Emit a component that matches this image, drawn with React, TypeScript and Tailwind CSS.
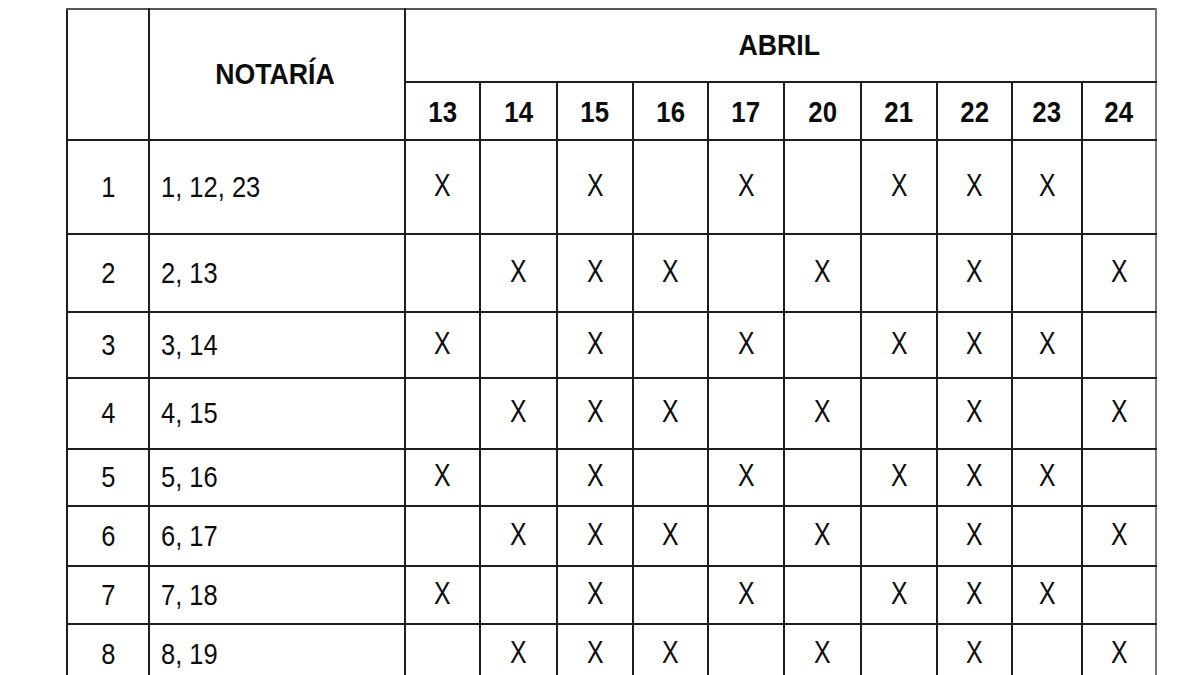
const days = [13, 14, 15, 16, 17, 20, 21, 22, 23, 24]
const dayWidths = [75, 77, 76, 75, 76, 77, 76, 75, 70, 74]

const oddPattern = [13, 15, 17, 21, 22, 23]
const evenPattern = [14, 15, 16, 20, 22, 24]

const rows = [
  { n: 1, notaria: "1, 12, 23", h: "h-[94px]" },
  { n: 2, notaria: "2, 13", h: "h-[78px]" },
  { n: 3, notaria: "3, 14", h: "h-[66px]" },
  { n: 4, notaria: "4, 15", h: "h-[71px]" },
  { n: 5, notaria: "5, 16", h: "h-[57px]" },
  { n: 6, notaria: "6, 17", h: "h-[60px]" },
  { n: 7, notaria: "7, 18", h: "h-[58px]" },
  { n: 8, notaria: "8, 19", h: "h-[60px]" },
]

function Narrow({ children, className }: { children: React.ReactNode; className: string }) {
  return <span className={`inline-block ${className}`}>{children}</span>
}

export default function App() {
  return (
    <div
      className="w-[1200px] h-[675px] overflow-hidden bg-white pl-[66px] pt-[8px] text-[#0d0d0d]"
      style={{ fontFamily: "'Liberation Sans', Arial, sans-serif" }}
    >
      <table className="table-fixed border-collapse w-[1090px]">
        <colgroup>
          <col className="w-[82px]" />
          <col className="w-[256px]" />
          {dayWidths.map((w, i) => (
            <col key={i} style={{ width: w }} />
          ))}
        </colgroup>
        <thead>
          <tr className="h-[73px]">
            <th rowSpan={2} className="border-2 border-[#1e1e1e] border-t-[#555]" />
            <th
              rowSpan={2}
              className="border-2 border-[#1e1e1e] border-t-[#555] text-[29px] font-bold text-center align-middle pr-[5px]"
            >
              <Narrow className="scale-x-[0.92] origin-center">NOTARÍA</Narrow>
            </th>
            <th
              colSpan={10}
              className="border-2 border-[#1e1e1e] border-t-[#555] border-r-[#777] text-[29px] font-bold text-center align-middle pr-[2px]"
            >
              <Narrow className="scale-x-[0.92] origin-center">ABRIL</Narrow>
            </th>
          </tr>
          <tr className="h-[58px]">
            {days.map((d, i) => (
              <th
                key={d}
                className={`border-2 border-[#1e1e1e] text-[30px] font-bold text-center align-middle ${
                  i === days.length - 1 ? "border-r-[#777]" : ""
                }`}
              >
                <Narrow className="scale-x-[0.86] origin-center">{d}</Narrow>
              </th>
            ))}
          </tr>
        </thead>
        <tbody>
          {rows.map((r) => {
            const marks = r.n % 2 === 1 ? oddPattern : evenPattern
            return (
              <tr key={r.n} className={r.h}>
                <td className="border-2 border-[#1e1e1e] text-[30px] text-center align-middle pb-[2px]">
                  <Narrow className="scale-x-[0.85] origin-center">{r.n}</Narrow>
                </td>
                <td className="border-2 border-[#1e1e1e] text-[30px] text-left align-middle pl-[11px] pb-[2px]">
                  <Narrow className="scale-x-[0.85] origin-left">{r.notaria}</Narrow>
                </td>
                {days.map((d, i) => (
                  <td
                    key={d}
                    className={`border-2 border-[#1e1e1e] text-[31px] text-center align-middle pb-[2px] ${
                      i === days.length - 1 ? "border-r-[#777]" : ""
                    }`}
                  >
                    {marks.includes(d) ? <Narrow className="scale-x-[0.8] origin-center">X</Narrow> : null}
                  </td>
                ))}
              </tr>
            )
          })}
        </tbody>
      </table>
    </div>
  )
}
